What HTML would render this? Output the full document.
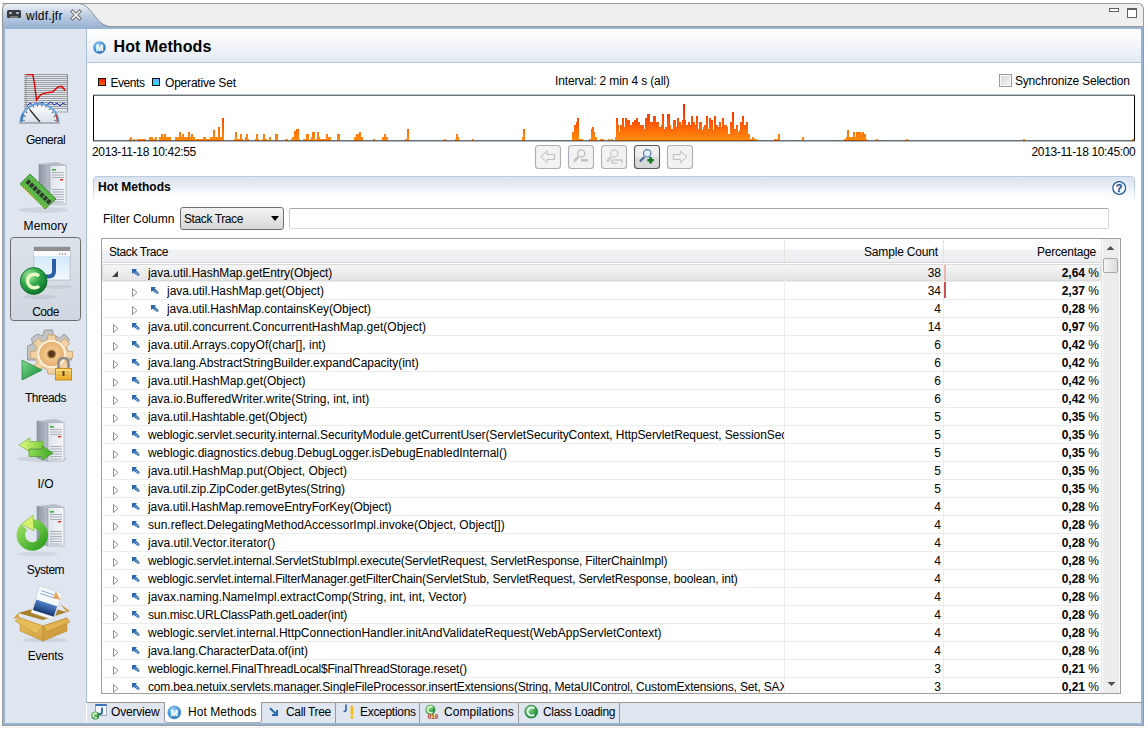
<!DOCTYPE html>
<html><head><meta charset="utf-8">
<style>
*{margin:0;padding:0;box-sizing:border-box}
html,body{width:1148px;height:730px;overflow:hidden;background:#fff;font-family:"Liberation Sans",sans-serif;font-size:12px;color:#000}
.a{position:absolute}
.t{position:absolute;white-space:nowrap;line-height:14px}
b{font-weight:bold}
</style></head><body>
<!-- top strip -->
<div class="a" style="left:2px;top:3px;width:1142px;height:24px;background:#efefef;border-top:1px solid #9a9a9a;border-right:1px solid #9a9a9a;border-top-right-radius:6px"></div>
<!-- active tab -->
<svg class="a" style="left:2px;top:3px" width="112" height="26">
<defs><linearGradient id="tg" x1="0" y1="0" x2="0" y2="1"><stop offset="0" stop-color="#eef2f8"/><stop offset="0.45" stop-color="#bccde3"/><stop offset="1" stop-color="#95b1d1"/></linearGradient></defs>
<path d="M0,26 L0,7 Q0,1 6,1 L75,1 C82,1 86,4 92,12 C99,21 103,23 109,23 L112,23 L112,26 Z" fill="url(#tg)"/>
<path d="M0.5,26 L0.5,7 Q0.5,0.5 6,0.5 L75,0.5 C82,0.5 86,4 92,12 C99,21 103,23.5 109,23.5 L112,23.5" fill="none" stroke="#8e8e8e" stroke-width="1"/>
</svg>
<!-- tab icon + text + close -->
<svg class="a" style="left:7px;top:10px" width="14" height="9"><rect x="0" y="0" width="14" height="8" rx="1.5" fill="#3a3a3a"/><rect x="2" y="2" width="3" height="2" fill="#9bb0c8"/><rect x="9" y="2" width="3" height="2" fill="#9bb0c8"/><rect x="3" y="6" width="8" height="2" fill="#777"/></svg>
<div class="t" style="left:26px;top:9px;font-size:12px;letter-spacing:0.25px">wldf.jfr</div>
<svg class="a" style="left:70px;top:9px" width="12" height="12"><path d="M2.5,2.5 L9.5,9.5 M9.5,2.5 L2.5,9.5" stroke="#707070" stroke-width="3.4" stroke-linecap="square"/><path d="M2.5,2.5 L9.5,9.5 M9.5,2.5 L2.5,9.5" stroke="#fff" stroke-width="1.5" stroke-linecap="square"/></svg>
<!-- min/max -->
<div class="a" style="left:1109px;top:8px;width:10px;height:4px;border:1px solid #606060;background:#fff"></div>
<div class="a" style="left:1127px;top:8px;width:10px;height:10px;border:1px solid #606060;border-top-width:2px;background:#fff"></div>
<div class="a" style="left:111px;top:26px;width:1033px;height:1px;background:#9a9a9a"></div>
<!-- frame borders -->
<div class="a" style="left:2px;top:27px;width:1142px;height:699px;border:1px solid #9a9a9a;border-top:none"></div>
<div class="a" style="left:3px;top:27px;width:1140px;height:698px;border:2px solid #98b4d4"></div>
<!-- sidebar -->
<div class="a" style="left:5px;top:29px;width:81px;height:694px;background:#dfe6f0"></div>
<div class="a" style="left:86px;top:29px;width:1px;height:674px;background:#a9bfd9"></div>
<!-- content -->
<div class="a" style="left:87px;top:29px;width:1054px;height:674px;background:#fff"></div>
<!-- header -->
<div class="a" style="left:87px;top:29px;width:1054px;height:33px;background:linear-gradient(#ffffff,#e4eaf3)"></div>
<div class="a" style="left:87px;top:62px;width:1054px;height:1px;background:#b4c8de"></div>
<svg class="a" style="left:93px;top:41px" width="13" height="13"><defs><radialGradient id="mg" cx="0.4" cy="0.3" r="0.7"><stop offset="0" stop-color="#a4d2f4"/><stop offset="0.5" stop-color="#4c9cdc"/><stop offset="1" stop-color="#206cb4"/></radialGradient></defs><circle cx="6.5" cy="6.5" r="6.2" fill="url(#mg)"/><text x="6.5" y="10.4" text-anchor="middle" font-family="Liberation Sans" font-weight="bold" font-size="9" fill="#fff" stroke="#fff" stroke-width="0.3">M</text></svg>
<div class="t" style="left:113.5px;top:38px;font-size:16px;line-height:18px;font-weight:bold;letter-spacing:0.1px">Hot Methods</div>
<!-- legend -->
<div class="a" style="left:98px;top:78px;width:8px;height:8px;background:linear-gradient(#ff2000,#f86000);border:1px solid #111"></div>
<div class="t" style="left:110.5px;top:76px;font-size:12px;letter-spacing:-0.45px">Events</div>
<div class="a" style="left:152px;top:78px;width:8px;height:8px;background:linear-gradient(#6aa8ff,#20e0ff);border:1px solid #111"></div>
<div class="t" style="left:165px;top:76px;font-size:12px;letter-spacing:-0.2px">Operative Set</div>
<div class="t" style="left:555px;top:74px;font-size:12px;letter-spacing:-0.14px">Interval: 2 min 4 s (all)</div>
<div class="a" style="left:999px;top:74px;width:13px;height:13px;border:1px solid #9c9c9c;box-shadow:inset 0 0 0 1px #f8f8f8;background:linear-gradient(135deg,#d4d8de,#f4f4f6)"></div>
<div class="t" style="left:1015px;top:74px;font-size:12px;letter-spacing:-0.19px">Synchronize Selection</div>
<!-- chart -->
<div class="a" style="left:93px;top:95px;width:1042px;height:46px;border:1px solid #000;border-top:1px solid #747474;border-bottom:1px solid #707070;background:#fff"></div>
<div class="a" style="left:93px;top:141px;width:1042px;height:1px;background:#a8b8c8"></div><div class="a" style="left:93px;top:94px;width:1042px;height:1px;background:#b4c2d0"></div>
<svg class="a" style="left:0;top:0" width="1148" height="142"><defs><linearGradient id="bg" gradientUnits="userSpaceOnUse" x1="0" y1="100" x2="0" y2="140"><stop offset="0" stop-color="#ff1000"/><stop offset="0.5" stop-color="#ff4c00"/><stop offset="1" stop-color="#ff8c10"/></linearGradient></defs><path d="M129,139h1v1h-1zM130,137h2v3h-2zM133,139h2v1h-2zM137,139h9v1h-9zM149,137h4v3h-4zM153,139h2v1h-2zM155,137h2v3h-2zM159,137h2v3h-2zM161,134h2v6h-2zM163,137h1v3h-1zM164,134h2v6h-2zM166,137h5v3h-5zM175,137h4v3h-4zM179,132h2v8h-2zM181,137h1v3h-1zM182,134h2v6h-2zM184,137h4v3h-4zM188,132h2v8h-2zM190,137h1v3h-1zM191,134h2v6h-2zM193,137h2v3h-2zM196,139h7v1h-7zM203,137h3v3h-3zM206,139h4v1h-4zM210,137h3v3h-3zM213,130h2v10h-2zM215,137h3v3h-3zM218,127h2v13h-2zM220,137h2v3h-2zM222,118h2v22h-2zM234,139h1v1h-1zM235,132h2v8h-2zM237,139h3v1h-3zM240,134h2v6h-2zM242,139h1v1h-1zM245,137h1v3h-1zM246,134h2v6h-2zM248,139h1v1h-1zM255,139h1v1h-1zM256,134h2v6h-2zM258,139h1v1h-1zM262,139h1v1h-1zM263,134h2v6h-2zM265,139h2v1h-2zM269,137h2v3h-2zM275,134h3v6h-3zM285,139h3v1h-3zM291,139h1v1h-1zM292,137h2v3h-2zM294,131h2v9h-2zM296,129h3v11h-3zM299,139h1v1h-1zM303,139h3v1h-3zM306,134h3v6h-3zM310,139h1v1h-1zM311,137h1v3h-1zM312,132h3v8h-3zM316,139h1v1h-1zM317,132h2v8h-2zM319,137h1v3h-1zM320,139h6v1h-6zM326,134h2v6h-2zM328,137h3v3h-3zM337,134h3v6h-3zM354,137h2v3h-2zM356,134h3v6h-3zM359,132h2v8h-2zM361,137h2v3h-2zM373,139h2v1h-2zM382,137h2v3h-2zM384,134h2v6h-2zM386,137h2v3h-2zM405,139h2v1h-2zM407,129h2v11h-2zM444,139h2v1h-2zM455,139h1v1h-1zM456,134h2v6h-2zM458,137h1v3h-1zM472,139h2v1h-2zM522,137h1v3h-1zM523,129h2v11h-2zM572,132h2v8h-2zM574,125h2v15h-2zM576,122h1v18h-1zM577,118h2v22h-2zM579,139h4v1h-4zM589,139h2v1h-2zM591,129h1v11h-1zM592,127h2v13h-2zM594,132h1v8h-1zM595,137h2v3h-2zM600,139h4v1h-4zM608,139h2v1h-2zM611,139h2v1h-2zM615,137h1v3h-1zM616,118h2v22h-2zM618,125h1v15h-1zM619,132h1v8h-1zM620,125h2v15h-2zM622,118h2v22h-2zM624,127h1v13h-1zM625,118h2v22h-2zM627,120h3v20h-3zM630,125h2v15h-2zM632,122h2v18h-2zM634,120h2v20h-2zM636,118h2v22h-2zM638,122h2v18h-2zM640,125h4v15h-4zM644,129h1v11h-1zM645,118h2v22h-2zM647,114h3v26h-3zM650,122h3v18h-3zM653,116h3v24h-3zM656,122h3v18h-3zM659,127h2v13h-2zM661,125h1v15h-1zM662,114h2v26h-2zM664,129h1v11h-1zM665,127h2v13h-2zM667,114h3v26h-3zM670,125h1v15h-1zM671,129h2v11h-2zM673,120h3v20h-3zM676,127h1v13h-1zM677,118h2v22h-2zM679,122h2v18h-2zM681,125h1v15h-1zM682,120h1v20h-1zM683,104h2v36h-2zM685,120h1v20h-1zM686,125h2v15h-2zM688,122h2v18h-2zM690,125h1v15h-1zM691,116h2v24h-2zM693,122h2v18h-2zM695,125h1v15h-1zM696,116h2v24h-2zM698,129h1v11h-1zM699,122h3v18h-3zM702,130h1v10h-1zM703,127h1v13h-1zM704,125h2v15h-2zM706,116h2v24h-2zM708,129h1v11h-1zM709,118h2v22h-2zM711,120h2v20h-2zM713,130h1v10h-1zM714,116h2v24h-2zM716,125h2v15h-2zM718,127h1v13h-1zM719,122h2v18h-2zM721,127h1v13h-1zM722,118h2v22h-2zM724,125h3v15h-3zM727,127h1v13h-1zM728,134h2v6h-2zM730,122h2v18h-2zM732,112h2v28h-2zM734,129h2v11h-2zM736,125h2v15h-2zM738,132h1v8h-1zM739,130h1v10h-1zM740,122h2v18h-2zM742,116h2v24h-2zM744,125h2v15h-2zM746,122h2v18h-2zM748,134h2v6h-2zM750,139h2v1h-2zM752,137h2v3h-2zM754,139h3v1h-3zM774,139h4v1h-4zM778,134h2v6h-2zM802,137h2v3h-2zM844,139h2v1h-2zM846,137h1v3h-1zM847,130h2v10h-2zM849,137h4v3h-4zM853,132h2v8h-2zM855,137h1v3h-1zM856,132h5v8h-5zM861,134h1v6h-1zM862,132h2v8h-2zM864,134h2v6h-2zM866,139h1v1h-1zM876,139h2v1h-2zM906,139h2v1h-2zM1023,139h2v1h-2zM1132,139h2v1h-2z" fill="url(#bg)"/><path d="M129,140h3v1h-3zM133,140h2v1h-2zM137,140h9v1h-9zM149,140h8v1h-8zM159,140h12v1h-12zM175,140h20v1h-20zM196,140h28v1h-28zM234,140h9v1h-9zM245,140h4v1h-4zM255,140h4v1h-4zM262,140h5v1h-5zM269,140h2v1h-2zM275,140h3v1h-3zM285,140h3v1h-3zM291,140h9v1h-9zM303,140h6v1h-6zM310,140h5v1h-5zM316,140h15v1h-15zM337,140h3v1h-3zM354,140h9v1h-9zM373,140h2v1h-2zM382,140h6v1h-6zM405,140h4v1h-4zM444,140h2v1h-2zM455,140h4v1h-4zM472,140h2v1h-2zM522,140h3v1h-3zM572,140h11v1h-11zM589,140h8v1h-8zM600,140h4v1h-4zM608,140h2v1h-2zM611,140h2v1h-2zM615,140h142v1h-142zM774,140h6v1h-6zM802,140h2v1h-2zM844,140h23v1h-23zM876,140h2v1h-2zM906,140h2v1h-2zM1023,140h2v1h-2zM1132,140h2v1h-2z" fill="#a84a08"/></svg>
<div class="t" style="left:92px;top:145px;font-size:12px;letter-spacing:-0.35px">2013-11-18 10:42:55</div>
<div class="t" style="left:1000px;top:145px;font-size:12px;width:135.4px;text-align:right;letter-spacing:-0.35px">2013-11-18 10:45:00</div>
<!-- buttons -->
<svg class="a" style="left:530px;top:140px" width="170" height="34">
<defs><linearGradient id="btn4" x1="0" y1="0" x2="0" y2="1"><stop offset="0" stop-color="#f4f4f4"/><stop offset="0.47" stop-color="#ececec"/><stop offset="0.53" stop-color="#dcdcdc"/><stop offset="1" stop-color="#d6d6d6"/></linearGradient></defs>
<g fill="#f2f2f2" stroke="#aab0b6" stroke-width="1.1">
<rect x="5.5" y="5.5" width="25" height="23" rx="3"/>
<rect x="38.5" y="5.5" width="25" height="23" rx="3"/>
<rect x="71.5" y="5.5" width="25" height="23" rx="3"/>
<rect x="137.5" y="5.5" width="25" height="23" rx="3"/>
</g>
<rect x="104.5" y="5.5" width="25" height="23" rx="3" fill="url(#btn4)" stroke="#5a5a5a" stroke-width="1.1"/>
<path d="M11,16.6 L17,11 V14.5 H24.6 V19.4 H17 V22.6 Z" fill="none" stroke="#b4b4b4" stroke-width="0.9"/>
<path d="M157,16.6 L150.3,11 V14.5 H143.3 V19.4 H150.3 V22.6 Z" fill="none" stroke="#b4b4b4" stroke-width="0.9"/>
<circle cx="51.2" cy="13.5" r="3.6" fill="none" stroke="#bcbcbc" stroke-width="1.2"/>
<path d="M44,21.5 L48.3,17" stroke="#c4c4c4" stroke-width="2.6"/>
<rect x="51" y="19" width="7" height="2.6" fill="#c4c4c4"/>
<circle cx="84.2" cy="13.5" r="3.6" fill="none" stroke="#c8c8c8" stroke-width="1.2"/>
<path d="M77,21.5 L81.3,17" stroke="#cacaca" stroke-width="2.6"/>
<path d="M82,20 H92 V23 M82,20 V23 H87" fill="none" stroke="#cacaca" stroke-width="1.6"/>
<circle cx="117.2" cy="13.3" r="3.7" fill="#e8f0fa" stroke="#5a7ab0" stroke-width="1.2"/>
<path d="M110,21.5 L114.3,17" stroke="#4a6a9a" stroke-width="2.2"/>
<path d="M120.6,17 V23.4 M117.4,20.2 H123.8" stroke="#0e7a20" stroke-width="2.6"/>
</svg>
<!-- section box -->
<div class="a" style="left:93px;top:176px;width:1042px;height:26px;border:1px solid #b9cbe0;border-bottom:none;border-radius:4px 4px 0 0;background:linear-gradient(#dae3ee,#ffffff);-webkit-mask-image:linear-gradient(#000 40%,transparent)"></div>
<div class="t" style="left:98px;top:180px;font-weight:bold;font-size:12px">Hot Methods</div>
<svg class="a" style="left:1112px;top:181px" width="15" height="15"><circle cx="7.2" cy="7" r="6.4" fill="#fff" stroke="#1e5a9a" stroke-width="1.3"/><text x="7.2" y="11.2" text-anchor="middle" font-family="Liberation Sans" font-weight="bold" font-size="11" fill="#1e5a9a" stroke="#1e5a9a" stroke-width="0.4">?</text></svg>
<!-- filter -->
<div class="t" style="left:103px;top:212px;font-size:12px">Filter Column</div>
<div class="a" style="left:180px;top:207px;width:104px;height:23px;border:1px solid #707070;border-radius:3px;background:linear-gradient(#f2f2f2,#e6e6e6 50%,#d6d6d6)"></div>
<div class="t" style="left:184px;top:212px;font-size:12px;letter-spacing:-0.4px">Stack Trace</div>
<svg class="a" style="left:271px;top:216px" width="9" height="6"><path d="M0,0 L8,0 L4,5 Z" fill="#000"/></svg>
<div class="a" style="left:289px;top:208px;width:820px;height:21px;border:1px solid #d2d8e0;border-top-color:#a8a8a8;border-left-color:#c8ccd2;border-radius:2px;background:#fff"></div>

<div class="a" style="left:101px;top:238px;width:1020px;height:456px;border:1px solid #a0a0a0;background:#fff;overflow:hidden">
<div class="a" style="left:0;top:0;width:1000px;height:24px;background:linear-gradient(#ffffff 0,#ffffff 40%,#f1f2f4 50%,#eceef1 100%);border-bottom:1px solid #d5d5d5"></div>
<div class="a" style="left:682px;top:1px;width:1px;height:22px;background:#e3e3e3"></div>
<div class="a" style="left:841px;top:1px;width:1px;height:22px;background:#e3e3e3"></div>
<div class="t" style="left:7px;top:6px;letter-spacing:-0.4px">Stack Trace</div>
<div class="t" style="left:736px;top:6px;width:100px;text-align:right;letter-spacing:-0.17px">Sample Count</div>
<div class="t" style="left:894px;top:6px;width:100px;text-align:right;letter-spacing:-0.25px">Percentage</div>
<div class="a" style="left:0px;top:25px;width:999px;height:17px;background:linear-gradient(#f6f6f6,#e4e4e4);border:1px solid #dadada;border-radius:2px"></div>
<div class="a" style="left:0;top:42px;width:999px;height:1px;background:#ededed"></div>
<div class="a" style="left:682px;top:25px;width:1px;height:18px;background:#ededed"></div>
<div class="a" style="left:841px;top:25px;width:1px;height:18px;background:#ededed"></div>
<svg class="a" style="left:9px;top:32px" width="8" height="7"><path d="M7,0 L7,6 L1,6 Z" fill="#404040"/></svg>
<svg class="a" style="left:29.5px;top:30px" width="9" height="9"><path d="M0,0 H5 L3.7,1.3 L7.2,4.8 Q8,5.7 7.1,6.5 Q6.2,7.3 5.4,6.5 L1.3,3.7 L0,5 Z" fill="#2c66ac"/><path d="M3.2,3 L6.3,5.8" stroke="#b8d0ec" stroke-width="0.9"/></svg>
<div class="t" style="left:46px;top:27px;line-height:14px;width:636px;overflow:hidden;letter-spacing:-0.0522px">java.util.HashMap.getEntry(Object)</div>
<div class="t" style="left:738px;top:27px;width:101px;text-align:right">38</div>
<div class="t" style="left:888px;top:27px;width:109px;text-align:right"><b>2,64</b> %</div>
<div class="a" style="left:0;top:60px;width:999px;height:1px;background:#ededed"></div>
<div class="a" style="left:682px;top:43px;width:1px;height:18px;background:#ededed"></div>
<div class="a" style="left:841px;top:43px;width:1px;height:18px;background:#ededed"></div>
<svg class="a" style="left:29px;top:49px" width="8" height="10"><path d="M1.5,0.5 L6,4.5 L1.5,8.5 Z" fill="none" stroke="#909090" stroke-width="1"/></svg>
<svg class="a" style="left:48.5px;top:48px" width="9" height="9"><path d="M0,0 H5 L3.7,1.3 L7.2,4.8 Q8,5.7 7.1,6.5 Q6.2,7.3 5.4,6.5 L1.3,3.7 L0,5 Z" fill="#2c66ac"/><path d="M3.2,3 L6.3,5.8" stroke="#b8d0ec" stroke-width="0.9"/></svg>
<div class="t" style="left:65px;top:45px;line-height:14px;width:617px;overflow:hidden;letter-spacing:-0.0368px">java.util.HashMap.get(Object)</div>
<div class="t" style="left:738px;top:45px;width:101px;text-align:right">34</div>
<div class="t" style="left:888px;top:45px;width:109px;text-align:right"><b>2,37</b> %</div>
<div class="a" style="left:0;top:78px;width:999px;height:1px;background:#ededed"></div>
<div class="a" style="left:682px;top:61px;width:1px;height:18px;background:#ededed"></div>
<div class="a" style="left:841px;top:61px;width:1px;height:18px;background:#ededed"></div>
<svg class="a" style="left:29px;top:67px" width="8" height="10"><path d="M1.5,0.5 L6,4.5 L1.5,8.5 Z" fill="none" stroke="#909090" stroke-width="1"/></svg>
<svg class="a" style="left:48.5px;top:66px" width="9" height="9"><path d="M0,0 H5 L3.7,1.3 L7.2,4.8 Q8,5.7 7.1,6.5 Q6.2,7.3 5.4,6.5 L1.3,3.7 L0,5 Z" fill="#2c66ac"/><path d="M3.2,3 L6.3,5.8" stroke="#b8d0ec" stroke-width="0.9"/></svg>
<div class="t" style="left:65px;top:63px;line-height:14px;width:617px;overflow:hidden;letter-spacing:-0.0746px">java.util.HashMap.containsKey(Object)</div>
<div class="t" style="left:738px;top:63px;width:101px;text-align:right">4</div>
<div class="t" style="left:888px;top:63px;width:109px;text-align:right"><b>0,28</b> %</div>
<div class="a" style="left:0;top:96px;width:999px;height:1px;background:#ededed"></div>
<div class="a" style="left:682px;top:79px;width:1px;height:18px;background:#ededed"></div>
<div class="a" style="left:841px;top:79px;width:1px;height:18px;background:#ededed"></div>
<svg class="a" style="left:10px;top:85px" width="8" height="10"><path d="M1.5,0.5 L6,4.5 L1.5,8.5 Z" fill="none" stroke="#909090" stroke-width="1"/></svg>
<svg class="a" style="left:29.5px;top:84px" width="9" height="9"><path d="M0,0 H5 L3.7,1.3 L7.2,4.8 Q8,5.7 7.1,6.5 Q6.2,7.3 5.4,6.5 L1.3,3.7 L0,5 Z" fill="#2c66ac"/><path d="M3.2,3 L6.3,5.8" stroke="#b8d0ec" stroke-width="0.9"/></svg>
<div class="t" style="left:46px;top:81px;line-height:14px;width:636px;overflow:hidden;letter-spacing:0.0128px">java.util.concurrent.ConcurrentHashMap.get(Object)</div>
<div class="t" style="left:738px;top:81px;width:101px;text-align:right">14</div>
<div class="t" style="left:888px;top:81px;width:109px;text-align:right"><b>0,97</b> %</div>
<div class="a" style="left:0;top:114px;width:999px;height:1px;background:#ededed"></div>
<div class="a" style="left:682px;top:97px;width:1px;height:18px;background:#ededed"></div>
<div class="a" style="left:841px;top:97px;width:1px;height:18px;background:#ededed"></div>
<svg class="a" style="left:10px;top:103px" width="8" height="10"><path d="M1.5,0.5 L6,4.5 L1.5,8.5 Z" fill="none" stroke="#909090" stroke-width="1"/></svg>
<svg class="a" style="left:29.5px;top:102px" width="9" height="9"><path d="M0,0 H5 L3.7,1.3 L7.2,4.8 Q8,5.7 7.1,6.5 Q6.2,7.3 5.4,6.5 L1.3,3.7 L0,5 Z" fill="#2c66ac"/><path d="M3.2,3 L6.3,5.8" stroke="#b8d0ec" stroke-width="0.9"/></svg>
<div class="t" style="left:46px;top:99px;line-height:14px;width:636px;overflow:hidden;letter-spacing:0.0087px">java.util.Arrays.copyOf(char[], int)</div>
<div class="t" style="left:738px;top:99px;width:101px;text-align:right">6</div>
<div class="t" style="left:888px;top:99px;width:109px;text-align:right"><b>0,42</b> %</div>
<div class="a" style="left:0;top:132px;width:999px;height:1px;background:#ededed"></div>
<div class="a" style="left:682px;top:115px;width:1px;height:18px;background:#ededed"></div>
<div class="a" style="left:841px;top:115px;width:1px;height:18px;background:#ededed"></div>
<svg class="a" style="left:10px;top:121px" width="8" height="10"><path d="M1.5,0.5 L6,4.5 L1.5,8.5 Z" fill="none" stroke="#909090" stroke-width="1"/></svg>
<svg class="a" style="left:29.5px;top:120px" width="9" height="9"><path d="M0,0 H5 L3.7,1.3 L7.2,4.8 Q8,5.7 7.1,6.5 Q6.2,7.3 5.4,6.5 L1.3,3.7 L0,5 Z" fill="#2c66ac"/><path d="M3.2,3 L6.3,5.8" stroke="#b8d0ec" stroke-width="0.9"/></svg>
<div class="t" style="left:46px;top:117px;line-height:14px;width:636px;overflow:hidden;letter-spacing:-0.0545px">java.lang.AbstractStringBuilder.expandCapacity(int)</div>
<div class="t" style="left:738px;top:117px;width:101px;text-align:right">6</div>
<div class="t" style="left:888px;top:117px;width:109px;text-align:right"><b>0,42</b> %</div>
<div class="a" style="left:0;top:150px;width:999px;height:1px;background:#ededed"></div>
<div class="a" style="left:682px;top:133px;width:1px;height:18px;background:#ededed"></div>
<div class="a" style="left:841px;top:133px;width:1px;height:18px;background:#ededed"></div>
<svg class="a" style="left:10px;top:139px" width="8" height="10"><path d="M1.5,0.5 L6,4.5 L1.5,8.5 Z" fill="none" stroke="#909090" stroke-width="1"/></svg>
<svg class="a" style="left:29.5px;top:138px" width="9" height="9"><path d="M0,0 H5 L3.7,1.3 L7.2,4.8 Q8,5.7 7.1,6.5 Q6.2,7.3 5.4,6.5 L1.3,3.7 L0,5 Z" fill="#2c66ac"/><path d="M3.2,3 L6.3,5.8" stroke="#b8d0ec" stroke-width="0.9"/></svg>
<div class="t" style="left:46px;top:135px;line-height:14px;width:636px;overflow:hidden;letter-spacing:-0.0196px">java.util.HashMap.get(Object)</div>
<div class="t" style="left:738px;top:135px;width:101px;text-align:right">6</div>
<div class="t" style="left:888px;top:135px;width:109px;text-align:right"><b>0,42</b> %</div>
<div class="a" style="left:0;top:168px;width:999px;height:1px;background:#ededed"></div>
<div class="a" style="left:682px;top:151px;width:1px;height:18px;background:#ededed"></div>
<div class="a" style="left:841px;top:151px;width:1px;height:18px;background:#ededed"></div>
<svg class="a" style="left:10px;top:157px" width="8" height="10"><path d="M1.5,0.5 L6,4.5 L1.5,8.5 Z" fill="none" stroke="#909090" stroke-width="1"/></svg>
<svg class="a" style="left:29.5px;top:156px" width="9" height="9"><path d="M0,0 H5 L3.7,1.3 L7.2,4.8 Q8,5.7 7.1,6.5 Q6.2,7.3 5.4,6.5 L1.3,3.7 L0,5 Z" fill="#2c66ac"/><path d="M3.2,3 L6.3,5.8" stroke="#b8d0ec" stroke-width="0.9"/></svg>
<div class="t" style="left:46px;top:153px;line-height:14px;width:636px;overflow:hidden;letter-spacing:0.0071px">java.io.BufferedWriter.write(String, int, int)</div>
<div class="t" style="left:738px;top:153px;width:101px;text-align:right">6</div>
<div class="t" style="left:888px;top:153px;width:109px;text-align:right"><b>0,42</b> %</div>
<div class="a" style="left:0;top:186px;width:999px;height:1px;background:#ededed"></div>
<div class="a" style="left:682px;top:169px;width:1px;height:18px;background:#ededed"></div>
<div class="a" style="left:841px;top:169px;width:1px;height:18px;background:#ededed"></div>
<svg class="a" style="left:10px;top:175px" width="8" height="10"><path d="M1.5,0.5 L6,4.5 L1.5,8.5 Z" fill="none" stroke="#909090" stroke-width="1"/></svg>
<svg class="a" style="left:29.5px;top:174px" width="9" height="9"><path d="M0,0 H5 L3.7,1.3 L7.2,4.8 Q8,5.7 7.1,6.5 Q6.2,7.3 5.4,6.5 L1.3,3.7 L0,5 Z" fill="#2c66ac"/><path d="M3.2,3 L6.3,5.8" stroke="#b8d0ec" stroke-width="0.9"/></svg>
<div class="t" style="left:46px;top:171px;line-height:14px;width:636px;overflow:hidden;letter-spacing:-0.0499px">java.util.Hashtable.get(Object)</div>
<div class="t" style="left:738px;top:171px;width:101px;text-align:right">5</div>
<div class="t" style="left:888px;top:171px;width:109px;text-align:right"><b>0,35</b> %</div>
<div class="a" style="left:0;top:204px;width:999px;height:1px;background:#ededed"></div>
<div class="a" style="left:682px;top:187px;width:1px;height:18px;background:#ededed"></div>
<div class="a" style="left:841px;top:187px;width:1px;height:18px;background:#ededed"></div>
<svg class="a" style="left:10px;top:193px" width="8" height="10"><path d="M1.5,0.5 L6,4.5 L1.5,8.5 Z" fill="none" stroke="#909090" stroke-width="1"/></svg>
<svg class="a" style="left:29.5px;top:192px" width="9" height="9"><path d="M0,0 H5 L3.7,1.3 L7.2,4.8 Q8,5.7 7.1,6.5 Q6.2,7.3 5.4,6.5 L1.3,3.7 L0,5 Z" fill="#2c66ac"/><path d="M3.2,3 L6.3,5.8" stroke="#b8d0ec" stroke-width="0.9"/></svg>
<div class="t" style="left:46px;top:189px;line-height:14px;width:636px;overflow:hidden;letter-spacing:-0.0916px">weblogic.servlet.security.internal.SecurityModule.getCurrentUser(ServletSecurityContext, HttpServletRequest, SessionSecurityData)</div>
<div class="t" style="left:738px;top:189px;width:101px;text-align:right">5</div>
<div class="t" style="left:888px;top:189px;width:109px;text-align:right"><b>0,35</b> %</div>
<div class="a" style="left:0;top:222px;width:999px;height:1px;background:#ededed"></div>
<div class="a" style="left:682px;top:205px;width:1px;height:18px;background:#ededed"></div>
<div class="a" style="left:841px;top:205px;width:1px;height:18px;background:#ededed"></div>
<svg class="a" style="left:10px;top:211px" width="8" height="10"><path d="M1.5,0.5 L6,4.5 L1.5,8.5 Z" fill="none" stroke="#909090" stroke-width="1"/></svg>
<svg class="a" style="left:29.5px;top:210px" width="9" height="9"><path d="M0,0 H5 L3.7,1.3 L7.2,4.8 Q8,5.7 7.1,6.5 Q6.2,7.3 5.4,6.5 L1.3,3.7 L0,5 Z" fill="#2c66ac"/><path d="M3.2,3 L6.3,5.8" stroke="#b8d0ec" stroke-width="0.9"/></svg>
<div class="t" style="left:46px;top:207px;line-height:14px;width:636px;overflow:hidden;letter-spacing:-0.0426px">weblogic.diagnostics.debug.DebugLogger.isDebugEnabledInternal()</div>
<div class="t" style="left:738px;top:207px;width:101px;text-align:right">5</div>
<div class="t" style="left:888px;top:207px;width:109px;text-align:right"><b>0,35</b> %</div>
<div class="a" style="left:0;top:240px;width:999px;height:1px;background:#ededed"></div>
<div class="a" style="left:682px;top:223px;width:1px;height:18px;background:#ededed"></div>
<div class="a" style="left:841px;top:223px;width:1px;height:18px;background:#ededed"></div>
<svg class="a" style="left:10px;top:229px" width="8" height="10"><path d="M1.5,0.5 L6,4.5 L1.5,8.5 Z" fill="none" stroke="#909090" stroke-width="1"/></svg>
<svg class="a" style="left:29.5px;top:228px" width="9" height="9"><path d="M0,0 H5 L3.7,1.3 L7.2,4.8 Q8,5.7 7.1,6.5 Q6.2,7.3 5.4,6.5 L1.3,3.7 L0,5 Z" fill="#2c66ac"/><path d="M3.2,3 L6.3,5.8" stroke="#b8d0ec" stroke-width="0.9"/></svg>
<div class="t" style="left:46px;top:225px;line-height:14px;width:636px;overflow:hidden;letter-spacing:-0.0113px">java.util.HashMap.put(Object, Object)</div>
<div class="t" style="left:738px;top:225px;width:101px;text-align:right">5</div>
<div class="t" style="left:888px;top:225px;width:109px;text-align:right"><b>0,35</b> %</div>
<div class="a" style="left:0;top:258px;width:999px;height:1px;background:#ededed"></div>
<div class="a" style="left:682px;top:241px;width:1px;height:18px;background:#ededed"></div>
<div class="a" style="left:841px;top:241px;width:1px;height:18px;background:#ededed"></div>
<svg class="a" style="left:10px;top:247px" width="8" height="10"><path d="M1.5,0.5 L6,4.5 L1.5,8.5 Z" fill="none" stroke="#909090" stroke-width="1"/></svg>
<svg class="a" style="left:29.5px;top:246px" width="9" height="9"><path d="M0,0 H5 L3.7,1.3 L7.2,4.8 Q8,5.7 7.1,6.5 Q6.2,7.3 5.4,6.5 L1.3,3.7 L0,5 Z" fill="#2c66ac"/><path d="M3.2,3 L6.3,5.8" stroke="#b8d0ec" stroke-width="0.9"/></svg>
<div class="t" style="left:46px;top:243px;line-height:14px;width:636px;overflow:hidden;letter-spacing:-0.0988px">java.util.zip.ZipCoder.getBytes(String)</div>
<div class="t" style="left:738px;top:243px;width:101px;text-align:right">5</div>
<div class="t" style="left:888px;top:243px;width:109px;text-align:right"><b>0,35</b> %</div>
<div class="a" style="left:0;top:276px;width:999px;height:1px;background:#ededed"></div>
<div class="a" style="left:682px;top:259px;width:1px;height:18px;background:#ededed"></div>
<div class="a" style="left:841px;top:259px;width:1px;height:18px;background:#ededed"></div>
<svg class="a" style="left:10px;top:265px" width="8" height="10"><path d="M1.5,0.5 L6,4.5 L1.5,8.5 Z" fill="none" stroke="#909090" stroke-width="1"/></svg>
<svg class="a" style="left:29.5px;top:264px" width="9" height="9"><path d="M0,0 H5 L3.7,1.3 L7.2,4.8 Q8,5.7 7.1,6.5 Q6.2,7.3 5.4,6.5 L1.3,3.7 L0,5 Z" fill="#2c66ac"/><path d="M3.2,3 L6.3,5.8" stroke="#b8d0ec" stroke-width="0.9"/></svg>
<div class="t" style="left:46px;top:261px;line-height:14px;width:636px;overflow:hidden;letter-spacing:-0.1066px">java.util.HashMap.removeEntryForKey(Object)</div>
<div class="t" style="left:738px;top:261px;width:101px;text-align:right">4</div>
<div class="t" style="left:888px;top:261px;width:109px;text-align:right"><b>0,28</b> %</div>
<div class="a" style="left:0;top:294px;width:999px;height:1px;background:#ededed"></div>
<div class="a" style="left:682px;top:277px;width:1px;height:18px;background:#ededed"></div>
<div class="a" style="left:841px;top:277px;width:1px;height:18px;background:#ededed"></div>
<svg class="a" style="left:10px;top:283px" width="8" height="10"><path d="M1.5,0.5 L6,4.5 L1.5,8.5 Z" fill="none" stroke="#909090" stroke-width="1"/></svg>
<svg class="a" style="left:29.5px;top:282px" width="9" height="9"><path d="M0,0 H5 L3.7,1.3 L7.2,4.8 Q8,5.7 7.1,6.5 Q6.2,7.3 5.4,6.5 L1.3,3.7 L0,5 Z" fill="#2c66ac"/><path d="M3.2,3 L6.3,5.8" stroke="#b8d0ec" stroke-width="0.9"/></svg>
<div class="t" style="left:46px;top:279px;line-height:14px;width:636px;overflow:hidden;letter-spacing:-0.0019px">sun.reflect.DelegatingMethodAccessorImpl.invoke(Object, Object[])</div>
<div class="t" style="left:738px;top:279px;width:101px;text-align:right">4</div>
<div class="t" style="left:888px;top:279px;width:109px;text-align:right"><b>0,28</b> %</div>
<div class="a" style="left:0;top:312px;width:999px;height:1px;background:#ededed"></div>
<div class="a" style="left:682px;top:295px;width:1px;height:18px;background:#ededed"></div>
<div class="a" style="left:841px;top:295px;width:1px;height:18px;background:#ededed"></div>
<svg class="a" style="left:10px;top:301px" width="8" height="10"><path d="M1.5,0.5 L6,4.5 L1.5,8.5 Z" fill="none" stroke="#909090" stroke-width="1"/></svg>
<svg class="a" style="left:29.5px;top:300px" width="9" height="9"><path d="M0,0 H5 L3.7,1.3 L7.2,4.8 Q8,5.7 7.1,6.5 Q6.2,7.3 5.4,6.5 L1.3,3.7 L0,5 Z" fill="#2c66ac"/><path d="M3.2,3 L6.3,5.8" stroke="#b8d0ec" stroke-width="0.9"/></svg>
<div class="t" style="left:46px;top:297px;line-height:14px;width:636px;overflow:hidden;letter-spacing:0.05px">java.util.Vector.iterator()</div>
<div class="t" style="left:738px;top:297px;width:101px;text-align:right">4</div>
<div class="t" style="left:888px;top:297px;width:109px;text-align:right"><b>0,28</b> %</div>
<div class="a" style="left:0;top:330px;width:999px;height:1px;background:#ededed"></div>
<div class="a" style="left:682px;top:313px;width:1px;height:18px;background:#ededed"></div>
<div class="a" style="left:841px;top:313px;width:1px;height:18px;background:#ededed"></div>
<svg class="a" style="left:10px;top:319px" width="8" height="10"><path d="M1.5,0.5 L6,4.5 L1.5,8.5 Z" fill="none" stroke="#909090" stroke-width="1"/></svg>
<svg class="a" style="left:29.5px;top:318px" width="9" height="9"><path d="M0,0 H5 L3.7,1.3 L7.2,4.8 Q8,5.7 7.1,6.5 Q6.2,7.3 5.4,6.5 L1.3,3.7 L0,5 Z" fill="#2c66ac"/><path d="M3.2,3 L6.3,5.8" stroke="#b8d0ec" stroke-width="0.9"/></svg>
<div class="t" style="left:46px;top:315px;line-height:14px;width:636px;overflow:hidden;letter-spacing:-0.1789px">weblogic.servlet.internal.ServletStubImpl.execute(ServletRequest, ServletResponse, FilterChainImpl)</div>
<div class="t" style="left:738px;top:315px;width:101px;text-align:right">4</div>
<div class="t" style="left:888px;top:315px;width:109px;text-align:right"><b>0,28</b> %</div>
<div class="a" style="left:0;top:348px;width:999px;height:1px;background:#ededed"></div>
<div class="a" style="left:682px;top:331px;width:1px;height:18px;background:#ededed"></div>
<div class="a" style="left:841px;top:331px;width:1px;height:18px;background:#ededed"></div>
<svg class="a" style="left:10px;top:337px" width="8" height="10"><path d="M1.5,0.5 L6,4.5 L1.5,8.5 Z" fill="none" stroke="#909090" stroke-width="1"/></svg>
<svg class="a" style="left:29.5px;top:336px" width="9" height="9"><path d="M0,0 H5 L3.7,1.3 L7.2,4.8 Q8,5.7 7.1,6.5 Q6.2,7.3 5.4,6.5 L1.3,3.7 L0,5 Z" fill="#2c66ac"/><path d="M3.2,3 L6.3,5.8" stroke="#b8d0ec" stroke-width="0.9"/></svg>
<div class="t" style="left:46px;top:333px;line-height:14px;width:636px;overflow:hidden;letter-spacing:-0.1632px">weblogic.servlet.internal.FilterManager.getFilterChain(ServletStub, ServletRequest, ServletResponse, boolean, int)</div>
<div class="t" style="left:738px;top:333px;width:101px;text-align:right">4</div>
<div class="t" style="left:888px;top:333px;width:109px;text-align:right"><b>0,28</b> %</div>
<div class="a" style="left:0;top:366px;width:999px;height:1px;background:#ededed"></div>
<div class="a" style="left:682px;top:349px;width:1px;height:18px;background:#ededed"></div>
<div class="a" style="left:841px;top:349px;width:1px;height:18px;background:#ededed"></div>
<svg class="a" style="left:10px;top:355px" width="8" height="10"><path d="M1.5,0.5 L6,4.5 L1.5,8.5 Z" fill="none" stroke="#909090" stroke-width="1"/></svg>
<svg class="a" style="left:29.5px;top:354px" width="9" height="9"><path d="M0,0 H5 L3.7,1.3 L7.2,4.8 Q8,5.7 7.1,6.5 Q6.2,7.3 5.4,6.5 L1.3,3.7 L0,5 Z" fill="#2c66ac"/><path d="M3.2,3 L6.3,5.8" stroke="#b8d0ec" stroke-width="0.9"/></svg>
<div class="t" style="left:46px;top:351px;line-height:14px;width:636px;overflow:hidden;letter-spacing:-0.0065px">javax.naming.NameImpl.extractComp(String, int, int, Vector)</div>
<div class="t" style="left:738px;top:351px;width:101px;text-align:right">4</div>
<div class="t" style="left:888px;top:351px;width:109px;text-align:right"><b>0,28</b> %</div>
<div class="a" style="left:0;top:384px;width:999px;height:1px;background:#ededed"></div>
<div class="a" style="left:682px;top:367px;width:1px;height:18px;background:#ededed"></div>
<div class="a" style="left:841px;top:367px;width:1px;height:18px;background:#ededed"></div>
<svg class="a" style="left:10px;top:373px" width="8" height="10"><path d="M1.5,0.5 L6,4.5 L1.5,8.5 Z" fill="none" stroke="#909090" stroke-width="1"/></svg>
<svg class="a" style="left:29.5px;top:372px" width="9" height="9"><path d="M0,0 H5 L3.7,1.3 L7.2,4.8 Q8,5.7 7.1,6.5 Q6.2,7.3 5.4,6.5 L1.3,3.7 L0,5 Z" fill="#2c66ac"/><path d="M3.2,3 L6.3,5.8" stroke="#b8d0ec" stroke-width="0.9"/></svg>
<div class="t" style="left:46px;top:369px;line-height:14px;width:636px;overflow:hidden;letter-spacing:-0.2339px">sun.misc.URLClassPath.getLoader(int)</div>
<div class="t" style="left:738px;top:369px;width:101px;text-align:right">4</div>
<div class="t" style="left:888px;top:369px;width:109px;text-align:right"><b>0,28</b> %</div>
<div class="a" style="left:0;top:402px;width:999px;height:1px;background:#ededed"></div>
<div class="a" style="left:682px;top:385px;width:1px;height:18px;background:#ededed"></div>
<div class="a" style="left:841px;top:385px;width:1px;height:18px;background:#ededed"></div>
<svg class="a" style="left:10px;top:391px" width="8" height="10"><path d="M1.5,0.5 L6,4.5 L1.5,8.5 Z" fill="none" stroke="#909090" stroke-width="1"/></svg>
<svg class="a" style="left:29.5px;top:390px" width="9" height="9"><path d="M0,0 H5 L3.7,1.3 L7.2,4.8 Q8,5.7 7.1,6.5 Q6.2,7.3 5.4,6.5 L1.3,3.7 L0,5 Z" fill="#2c66ac"/><path d="M3.2,3 L6.3,5.8" stroke="#b8d0ec" stroke-width="0.9"/></svg>
<div class="t" style="left:46px;top:387px;line-height:14px;width:636px;overflow:hidden;letter-spacing:-0.0182px">weblogic.servlet.internal.HttpConnectionHandler.initAndValidateRequest(WebAppServletContext)</div>
<div class="t" style="left:738px;top:387px;width:101px;text-align:right">4</div>
<div class="t" style="left:888px;top:387px;width:109px;text-align:right"><b>0,28</b> %</div>
<div class="a" style="left:0;top:420px;width:999px;height:1px;background:#ededed"></div>
<div class="a" style="left:682px;top:403px;width:1px;height:18px;background:#ededed"></div>
<div class="a" style="left:841px;top:403px;width:1px;height:18px;background:#ededed"></div>
<svg class="a" style="left:10px;top:409px" width="8" height="10"><path d="M1.5,0.5 L6,4.5 L1.5,8.5 Z" fill="none" stroke="#909090" stroke-width="1"/></svg>
<svg class="a" style="left:29.5px;top:408px" width="9" height="9"><path d="M0,0 H5 L3.7,1.3 L7.2,4.8 Q8,5.7 7.1,6.5 Q6.2,7.3 5.4,6.5 L1.3,3.7 L0,5 Z" fill="#2c66ac"/><path d="M3.2,3 L6.3,5.8" stroke="#b8d0ec" stroke-width="0.9"/></svg>
<div class="t" style="left:46px;top:405px;line-height:14px;width:636px;overflow:hidden;letter-spacing:-0.1165px">java.lang.CharacterData.of(int)</div>
<div class="t" style="left:738px;top:405px;width:101px;text-align:right">4</div>
<div class="t" style="left:888px;top:405px;width:109px;text-align:right"><b>0,28</b> %</div>
<div class="a" style="left:0;top:438px;width:999px;height:1px;background:#ededed"></div>
<div class="a" style="left:682px;top:421px;width:1px;height:18px;background:#ededed"></div>
<div class="a" style="left:841px;top:421px;width:1px;height:18px;background:#ededed"></div>
<svg class="a" style="left:10px;top:427px" width="8" height="10"><path d="M1.5,0.5 L6,4.5 L1.5,8.5 Z" fill="none" stroke="#909090" stroke-width="1"/></svg>
<svg class="a" style="left:29.5px;top:426px" width="9" height="9"><path d="M0,0 H5 L3.7,1.3 L7.2,4.8 Q8,5.7 7.1,6.5 Q6.2,7.3 5.4,6.5 L1.3,3.7 L0,5 Z" fill="#2c66ac"/><path d="M3.2,3 L6.3,5.8" stroke="#b8d0ec" stroke-width="0.9"/></svg>
<div class="t" style="left:46px;top:423px;line-height:14px;width:636px;overflow:hidden;letter-spacing:-0.1814px">weblogic.kernel.FinalThreadLocal$FinalThreadStorage.reset()</div>
<div class="t" style="left:738px;top:423px;width:101px;text-align:right">3</div>
<div class="t" style="left:888px;top:423px;width:109px;text-align:right"><b>0,21</b> %</div>
<div class="a" style="left:0;top:456px;width:999px;height:1px;background:#ededed"></div>
<div class="a" style="left:682px;top:439px;width:1px;height:18px;background:#ededed"></div>
<div class="a" style="left:841px;top:439px;width:1px;height:18px;background:#ededed"></div>
<svg class="a" style="left:10px;top:445px" width="8" height="10"><path d="M1.5,0.5 L6,4.5 L1.5,8.5 Z" fill="none" stroke="#909090" stroke-width="1"/></svg>
<svg class="a" style="left:29.5px;top:444px" width="9" height="9"><path d="M0,0 H5 L3.7,1.3 L7.2,4.8 Q8,5.7 7.1,6.5 Q6.2,7.3 5.4,6.5 L1.3,3.7 L0,5 Z" fill="#2c66ac"/><path d="M3.2,3 L6.3,5.8" stroke="#b8d0ec" stroke-width="0.9"/></svg>
<div class="t" style="left:46px;top:441px;line-height:14px;width:636px;overflow:hidden;letter-spacing:-0.1609px">com.bea.netuix.servlets.manager.SingleFileProcessor.insertExtensions(String, MetaUIControl, CustomExtensions, Set, SAXParser)</div>
<div class="t" style="left:738px;top:441px;width:101px;text-align:right">3</div>
<div class="t" style="left:888px;top:441px;width:109px;text-align:right"><b>0,21</b> %</div>
<div class="a" style="left:842px;top:26px;width:2px;height:16px;background:#e9b5b5"></div>
<div class="a" style="left:842px;top:43px;width:2px;height:16px;background:#c85050"></div>
<div class="a" style="left:999px;top:0px;width:19px;height:454px;background:#ededed;border-left:1px solid #e6e6e6;box-shadow:inset 1px 0 0 #fafafa,inset -1px 0 0 #fafafa"></div>
<svg class="a" style="left:1004px;top:6px" width="10" height="6"><path d="M0.5,5 L4.5,1 L8.5,5 Z" fill="#505050"/></svg>
<div class="a" style="left:1001px;top:19px;width:15px;height:15px;border:1px solid #a8a8a8;border-radius:2px;background:linear-gradient(90deg,#f4f4f4,#dcdcdc)"></div>
<svg class="a" style="left:1005px;top:442px" width="10" height="6"><path d="M0.5,1 L4.5,5 L8.5,1 Z" fill="#505050"/></svg>
</div>
<!-- bottom tabs -->
<div class="a" style="left:87px;top:694px;width:1054px;height:8px;background:#fff"></div>
<div class="a" style="left:87px;top:702px;width:1054px;height:1px;background:#9a9a9a"></div>
<div class="a" style="left:87px;top:703px;width:1054px;height:20px;background:#dfe6f0"></div>
<div class="a" style="left:164px;top:702px;width:98px;height:21px;background:#fff;border:1px solid #9a9a9a;border-top:none;border-bottom-color:#b0b0b0;border-bottom-right-radius:3px;border-bottom-left-radius:3px"></div>
<div class="a" style="left:335px;top:703px;width:1px;height:20px;background:#9a9a9a"></div>
<div class="a" style="left:419px;top:703px;width:1px;height:20px;background:#9a9a9a"></div>
<div class="a" style="left:518px;top:703px;width:1px;height:20px;background:#9a9a9a"></div>
<div class="a" style="left:619px;top:703px;width:1px;height:20px;background:#9a9a9a"></div>
<svg class="a" style="left:86px;top:700px" width="540" height="24">
<defs>
<radialGradient id="tcg" cx="0.35" cy="0.3" r="0.8"><stop offset="0" stop-color="#8ada8a"/><stop offset="1" stop-color="#0c7a2c"/></radialGradient>
<radialGradient id="tmg" cx="0.4" cy="0.3" r="0.75"><stop offset="0" stop-color="#a4d2f4"/><stop offset="0.5" stop-color="#4c9cdc"/><stop offset="1" stop-color="#206cb4"/></radialGradient>
</defs>
<!-- overview -->
<rect x="9.5" y="4.5" width="11" height="11" fill="#f4f8fc" stroke="#8a9ab0" stroke-width="0.8"/>
<rect x="9.5" y="4" width="11" height="2" fill="#3a70c0"/>
<path d="M9.5,6 V15" stroke="#c8a040" stroke-width="0.8"/>
<path d="M16,7.5 V12.5 Q16,14 14,14 H12.5" fill="none" stroke="#2a5ea8" stroke-width="1.8"/>
<circle cx="9.2" cy="15.6" r="4" fill="url(#tcg)"/>
<path d="M11,14 A2.2,2.2 0 1 0 11,17.2" fill="none" stroke="#e8fac8" stroke-width="1.3"/>
<!-- M -->
<circle cx="88.3" cy="12.4" r="6.5" fill="url(#tmg)" stroke="#3a8ad0" stroke-width="0.5"/>
<text x="88.3" y="15.6" text-anchor="middle" font-family="Liberation Sans" font-weight="bold" font-size="9" fill="#fff" stroke="#fff" stroke-width="0.3">M</text>
<!-- call tree arrow down-right -->
<path d="M184,8.3 L190,14 M191,10 V15 H186" fill="none" stroke="#2a6ab0" stroke-width="2"/>
<!-- exceptions -->
<path d="M260,4.5 V9.5 Q260,11.5 258,11.5 H257.5" fill="none" stroke="#2a5ea8" stroke-width="1.6"/>
<path d="M266,7 V14" stroke="#f0c020" stroke-width="3" stroke-linecap="round"/>
<circle cx="266" cy="17.2" r="1.6" fill="#f0c020"/>
<!-- compilations -->
<circle cx="344.4" cy="9.8" r="5" fill="url(#tcg)"/>
<path d="M346.6,7.6 A3,3 0 1 0 346.6,12" fill="none" stroke="#e8fac8" stroke-width="1.5"/>
<text x="341.6" y="19" font-family="Liberation Mono" font-weight="bold" font-size="6.5" fill="#c04010" letter-spacing="-0.5">010</text>
<!-- class loading -->
<circle cx="445.2" cy="11.6" r="6.5" fill="url(#tcg)" stroke="#0c6a28" stroke-width="0.5"/>
<path d="M448.2,8.6 A4,4 0 1 0 448.2,14.6" fill="none" stroke="#f0fff0" stroke-width="2"/>
</svg>
<div class="t" style="left:111px;top:705px;letter-spacing:-0.2px">Overview</div>
<div class="t" style="left:188px;top:705px;letter-spacing:0.05px">Hot Methods</div>
<div class="t" style="left:286px;top:705px;letter-spacing:-0.35px">Call Tree</div>
<div class="t" style="left:360px;top:705px;letter-spacing:-0.3px">Exceptions</div>
<div class="t" style="left:444px;top:705px;letter-spacing:0.03px">Compilations</div>
<div class="t" style="left:543px;top:705px;letter-spacing:-0.3px">Class Loading</div>
<svg class="a" style="left:0;top:0" width="87" height="700">
<defs>
<linearGradient id="srvL" x1="0" y1="0" x2="1" y2="0"><stop offset="0" stop-color="#8c94a2"/><stop offset="1" stop-color="#bcc2cc"/></linearGradient>
<linearGradient id="srvF" x1="0" y1="0" x2="1" y2="0"><stop offset="0" stop-color="#dfe3e9"/><stop offset="1" stop-color="#f4f6f8"/></linearGradient>
<linearGradient id="gauge" x1="0" y1="0" x2="0" y2="1"><stop offset="0" stop-color="#ffffff"/><stop offset="1" stop-color="#d8e0ea"/></linearGradient>
<radialGradient id="cg" cx="0.35" cy="0.3" r="0.75"><stop offset="0" stop-color="#a8e8a0"/><stop offset="0.5" stop-color="#30a848"/><stop offset="1" stop-color="#0a7028"/></radialGradient>
<linearGradient id="win" x1="0" y1="0" x2="0" y2="1"><stop offset="0" stop-color="#c4e2f8"/><stop offset="1" stop-color="#f4faff"/></linearGradient>
<linearGradient id="selb" x1="0" y1="0" x2="0" y2="1"><stop offset="0" stop-color="#dce2ea"/><stop offset="1" stop-color="#d0d7e0"/></linearGradient>
<radialGradient id="gear" cx="0.5" cy="0.5" r="0.5"><stop offset="0" stop-color="#f0c890"/><stop offset="0.6" stop-color="#e8bc80"/><stop offset="0.75" stop-color="#fae8cc"/><stop offset="1" stop-color="#e0b888"/></radialGradient>
<linearGradient id="play" x1="0" y1="0" x2="1" y2="1"><stop offset="0" stop-color="#80d890"/><stop offset="1" stop-color="#0c8a30"/></linearGradient>
<linearGradient id="lock" x1="0" y1="0" x2="0" y2="1"><stop offset="0" stop-color="#ffe488"/><stop offset="1" stop-color="#e8a820"/></linearGradient>
<linearGradient id="arrL" x1="0" y1="0" x2="1" y2="0"><stop offset="0" stop-color="#e0f880"/><stop offset="1" stop-color="#7ccc40"/></linearGradient>
<linearGradient id="arrR" x1="0" y1="0" x2="1" y2="0"><stop offset="0" stop-color="#90dc50"/><stop offset="1" stop-color="#40a828"/></linearGradient>
<linearGradient id="boxF" x1="0" y1="0" x2="0" y2="1"><stop offset="0" stop-color="#f0c868"/><stop offset="1" stop-color="#d0a040"/></linearGradient>
<linearGradient id="docB" x1="0" y1="0" x2="0" y2="1"><stop offset="0" stop-color="#5080c8"/><stop offset="1" stop-color="#183870"/></linearGradient>
<g id="server">
 <path d="M0,2 L11,4 L11,42 L0,39 Z" fill="url(#srvL)" stroke="#8890a0" stroke-width="0.6"/>
 <path d="M0,2 L18,0 L27,3 L11,4 Z" fill="#b8bec8"/>
 <rect x="11" y="3.5" width="16" height="38.5" fill="url(#srvF)" stroke="#9aa2b0" stroke-width="0.6"/>
 <rect x="13" y="7" width="4" height="1.6" fill="#40b040"/>
 <path d="M13,10.5 H25 M13,13 H25 M13,15.5 H25 M13,27.5 H25 M13,30 H25 M13,32.5 H25 M13,35 H25 M13,37.5 H25 M13,40 H25" stroke="#9aa2ae" stroke-width="0.8"/>
 <rect x="21" y="17" width="3" height="1.4" fill="#e02020"/>
</g>
</defs>
<!-- General -->
<g>
 <path d="M24,74.5H68 M24,76.5H68 M24,78.5H68 M24,80.5H68 M24,82.5H68 M24,84.5H68 M24,86.5H68 M24,88.5H68 M24,90.5H68 M24,92.5H68 M24,94.5H68 M24,96.5H68 M24,98.5H68 M24,100.5H68 M24,102.5H68 M24,104.5H68 M24,106.5H68 M24,108.5H68" stroke="#8e8e8e" stroke-width="1" opacity="0.8"/>
 <path d="M26,74 V111 M67.5,74 V111" stroke="#909090" stroke-width="1"/>
 <path d="M55,111V113 M58,111V113 M61,111V113 M64,111V113 M67,111V113" stroke="#888" stroke-width="1"/>
 <path d="M26.5,74.6 L32.8,74.6 L34.6,84.7 L36.5,100 L40.8,94.5 L47,92.7 L52.5,92 L58,87 L61.7,86.2 L65.4,90.8" fill="none" stroke="#e00000" stroke-width="1.4"/>
 <path d="M27,106 L30,103 L33,105 L36,103 L39,105 L42,102 L45,105 L48,104 L51,102 L54,105 L57,103 L60,106 L63,103 L66,105" fill="none" stroke="#2030c8" stroke-width="1"/>
 <path d="M20.5,123 A19,19 0 0 1 58.5,123 Z" fill="url(#gauge)" stroke="#6aa4dc" stroke-width="2.2"/>
 <path d="M21.5,123 A18,18 0 0 1 23.5,114" fill="none" stroke="#3a7ac0" stroke-width="2"/>
 <path d="M57.5,123 A18,18 0 0 0 55.5,114" fill="none" stroke="#c04040" stroke-width="1.6"/>
 <path d="M24,121 A15.5,15.5 0 0 1 55,121" fill="none" stroke="#506070" stroke-width="1.4" stroke-dasharray="1.3 3"/>
 <path d="M40,122 L30,110" stroke="#303030" stroke-width="1.4"/>
 <rect x="20" y="122" width="39" height="2" fill="#a8b0b8"/>
</g>
<!-- Memory -->
<ellipse cx="43" cy="210" rx="25" ry="3" fill="#000" opacity="0.07"/>
<use href="#server" x="39" y="162"/>
<g>
 <path d="M30,174 L56,199 L45,209 L20,184 Z" fill="#5cb848" stroke="#2e7a28" stroke-width="0.8"/>
 <path d="M27,181 L50,203" stroke="#303830" stroke-width="4.5" stroke-dasharray="3.5 1.2"/>
 <path d="M21.5,186 L45,208" stroke="#e8c030" stroke-width="1.4" stroke-dasharray="1.4 1.6"/>
</g>
<!-- Code selected -->
<rect x="10.5" y="237.5" width="70" height="83" rx="3" fill="url(#selb)" stroke="#6c6c6c" stroke-width="1"/>
<ellipse cx="58" cy="287" rx="14" ry="2" fill="#000" opacity="0.06"/>
<ellipse cx="40" cy="297" rx="17" ry="2" fill="#000" opacity="0.07"/>
<rect x="34" y="247" width="36" height="33" fill="url(#win)" stroke="#a0a8b0" stroke-width="0.6"/>
<rect x="34" y="247" width="36" height="4" fill="#8e8e8e"/>
<rect x="34" y="251" width="36" height="5" fill="#fafafa"/>
<path d="M59,254H60.4 M61.8,254H63.2 M64.6,254H66" stroke="#666" stroke-width="1"/>
<path d="M54,259 V271 Q54,276.5 48.5,276.5 H43" fill="none" stroke="#2a5ea8" stroke-width="4"/>
<circle cx="33.7" cy="281" r="13.4" fill="url(#cg)" stroke="#0a6a28" stroke-width="0.8"/>
<path d="M39,276 A6.8,6.8 0 1 0 39,286" fill="none" stroke="#e8fac8" stroke-width="3.4"/>
<!-- Threads -->
<g transform="translate(48.5,351)">
 <path d="M-4,-21 H4 L5,-16 L11,-13 L16,-17 L21,-11 L17,-6 L19,0 L23,2 V9 L-21,9 V-5 L-16,-7 L-17,-13 L-11,-17 L-6,-15 Z" fill="#c4c4c4" stroke="#8c8c8c" stroke-width="0.8"/>
</g>
<g transform="translate(51.6,354)">
 <path d="M-3.5,-19 H3.5 L4.5,-14 L9,-12 L13,-15.5 L18,-10.5 L14.5,-6.5 L16,-3 L21,-2.5 V4 L16,4.5 L14.5,8 L18,12 L13,17 L9,13.5 L4.5,15.5 L3.5,20 H-3.5 L-4.5,15.5 L-9,13.5 L-13,17 L-18,12 L-14.5,8 L-16,4.5 L-21,4 V-2.5 L-16,-3 L-14.5,-6.5 L-18,-10.5 L-13,-15.5 L-9,-12 L-4.5,-14 Z" fill="#f0d2a4" stroke="#c89a60" stroke-width="0.8"/>
 <circle r="14" fill="#fff4e4"/>
 <circle r="12" fill="#eab878" stroke="#d8a060" stroke-width="0.6"/>
 <circle r="8" fill="#f0c488"/>
 <circle r="4" fill="#5a3a1c" stroke="#b88850" stroke-width="1.2"/>
</g>
<path d="M22,360 L42,370 L22,380 Z" fill="url(#play)" stroke="#0c7028" stroke-width="0.6"/>
<path d="M58.5,369 V363 Q58.5,358 63.5,358 Q68.5,358 68.5,363 V369" fill="none" stroke="#8c8c8c" stroke-width="2.4"/>
<rect x="55.5" y="368.5" width="16" height="11.5" fill="url(#lock)" stroke="#d08818" stroke-width="1"/>
<path d="M57,372H70 M57,375H70" stroke="#d09828" stroke-width="0.7"/>
<rect x="62.5" y="371" width="2" height="5" fill="#604010"/>
<!-- I/O -->
<ellipse cx="42" cy="459" rx="25" ry="3" fill="#000" opacity="0.08"/>
<use href="#server" x="37" y="419"/>
<path d="M19,445 L30,437.7 V441.5 H43 V448.5 H30 V452 Z" fill="url(#arrL)" stroke="#6aa830" stroke-width="0.6"/>
<path d="M53,453 L42,445.8 V449.5 H29 V456.5 H42 V460.4 Z" fill="url(#arrR)" stroke="#3c9020" stroke-width="0.6"/>
<!-- System -->
<ellipse cx="38" cy="554" rx="20" ry="2.5" fill="#000" opacity="0.06"/>
<use href="#server" x="37" y="504"/>
<defs><linearGradient id="ring" x1="0" y1="0" x2="1" y2="1"><stop offset="0" stop-color="#9ae060"/><stop offset="1" stop-color="#30a020"/></linearGradient></defs>
<path d="M24,527 A11.5,11.5 0 1 0 33,523.5" fill="none" stroke="url(#ring)" stroke-width="8.5"/>
<path d="M21.5,524 L33,515 L34,531 Z" fill="#d8f070" stroke="#7cbc40" stroke-width="0.7"/>
<!-- Events -->
<ellipse cx="45" cy="640" rx="22" ry="2.5" fill="#000" opacity="0.08"/>
<path d="M18,613 L43,606 L67,612 L43,620 Z" fill="#a88028"/>
<g transform="rotate(18 47 602)"><rect x="35" y="589" width="24" height="28" fill="#f4f8fc" stroke="#c8d0d8" stroke-width="0.6"/><rect x="36" y="603" width="22" height="11" fill="url(#docB)"/><path d="M38,593H52 M38,596H54" stroke="#8aa8d0" stroke-width="0.9"/><path d="M52,589 L59,596 L52,596 Z" fill="#f0a050"/></g>
<path d="M20,618 L43,626 L43,641 L20,631 Z" fill="url(#boxF)" stroke="#b88830" stroke-width="0.5"/>
<path d="M43,626 L67,618 L67,631 L43,641 Z" fill="#d0a040" stroke="#b08028" stroke-width="0.5"/>
<path d="M20,618 L43,626 L36,634 L15,621 Z" fill="#e8bc58" stroke="#b88830" stroke-width="0.5"/>
<path d="M43,626 L67,618 L70,622 L47,632 Z" fill="#e0b450" stroke="#b08028" stroke-width="0.5"/>
<path d="M18,613 L13,619 L20,618 Z" fill="#d8a848"/>
<path d="M60,604 L70,611 L67,612 Z" fill="#c89838"/>
</svg>

<div class="a" style="left:2px;top:727px;width:1144px;height:1px;background:#f0f0f0"></div>
<!-- sidebar labels -->
<div class="t" style="left:5px;top:133px;width:81px;text-align:center;letter-spacing:-0.5px">General</div>
<div class="t" style="left:5px;top:219px;width:81px;text-align:center;letter-spacing:0.1px">Memory</div>
<div class="t" style="left:5px;top:305px;width:81px;text-align:center;letter-spacing:-0.5px">Code</div>
<div class="t" style="left:5px;top:391px;width:81px;text-align:center;letter-spacing:-0.4px">Threads</div>
<div class="t" style="left:5px;top:477px;width:81px;text-align:center">I/O</div>
<div class="t" style="left:5px;top:563px;width:81px;text-align:center;letter-spacing:-0.45px">System</div>
<div class="t" style="left:5px;top:649px;width:81px;text-align:center;letter-spacing:-0.2px">Events</div>
</body></html>
